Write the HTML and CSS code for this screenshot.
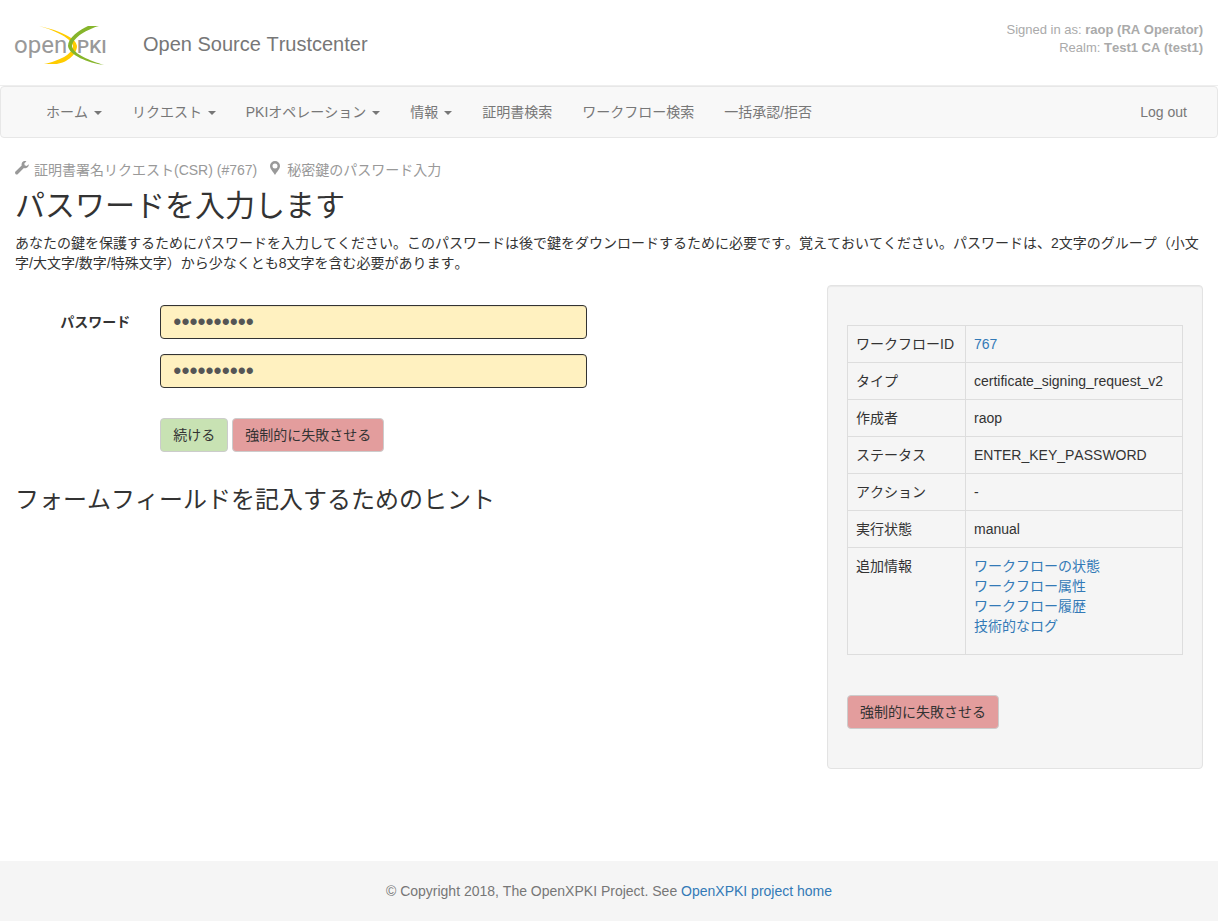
FILE: index.html
```
<!DOCTYPE html>
<html lang="ja">
<head>
<meta charset="utf-8">
<meta name="viewport" content="width=device-width, initial-scale=1">
<title>Open Source Trustcenter</title>
<link rel="stylesheet" href="styles.css">
</head>
<body>
<header class="header">
  <svg class="logo" viewBox="0 0 94 42" role="img" aria-label="openXPKI">
    <text class="logo-text" x="-1" y="29" font-size="24">open</text>
    <text class="logo-text logo-pki" x="62" y="29" font-size="19">PKI</text>
    <path fill="#fc0" d="M24 2C46 7 61 14 62 22C62 31 50 40 40 40H29C44 37 58 30 58 22C57 15 42 7 24 2Z"/>
    <path fill="#86b52b" d="M84 2H73C64 6 53 14 53 22C54 31 73 39 89 41C76 37 58 30 57 22C58 13 73 5 84 2Z"/>
  </svg>
  <span class="brand">Open Source Trustcenter</span>
  <div class="session">
    <div>Signed in as: <b>raop (RA Operator)</b></div>
    <div>Realm: <b>Test1 CA (test1)</b></div>
  </div>
</header>
<nav class="navbar">
  <a href="#">ホーム <span class="caret"></span></a>
  <a href="#">リクエスト <span class="caret"></span></a>
  <a href="#">PKIオペレーション <span class="caret"></span></a>
  <a href="#">情報 <span class="caret"></span></a>
  <a href="#">証明書検索</a>
  <a href="#">ワークフロー検索</a>
  <a href="#">一括承認/拒否</a>
  <a class="logout" href="#">Log out</a>
</nav>
<main class="page">
  <div class="crumbs">
    <svg class="crumb-icon" viewBox="0 0 14 14" aria-hidden="true"><path d="M13.8 3.2L11.7 4.9L9.6 4.2L9.4 2.3L11.4 .4C9.700-.3 7.700.3 6.900 1.900C6.500 2.800 6.500 3.700 6.700 4.500L.5 10.600C-.1 11.200-.1 12.200.5 12.900C1.200 13.600 2.200 13.600 2.900 12.900L8.900 6.900C10 7.400 11.500 7.200 12.500 6.300C13.500 5.500 13.900 4.300 13.800 3.200Z"/></svg>
    <span class="crumb">証明書署名リクエスト(CSR) (#767)</span>
    <svg class="crumb-icon" viewBox="0 0 14 14" aria-hidden="true"><path fill-rule="evenodd" d="M7 0A5 5 0 0 0 2 5C2 8 5 10.500 7 14C9 10.500 12 8 12 5A5 5 0 0 0 7 0ZM7 2.400A2.500 2.500 0 1 1 7 7.400A2.500 2.500 0 0 1 7 2.400Z"/></svg>
    <span class="crumb">秘密鍵のパスワード入力</span>
  </div>
  <h1>パスワードを入力します</h1>
  <p class="intro">あなたの鍵を保護するためにパスワードを入力してください。このパスワードは後で鍵をダウンロードするために必要です。覚えておいてください。パスワードは、2文字のグループ（小文字/大文字/数字/特殊文字）から少なくとも8文字を含む必要があります。</p>
  <div class="columns">
    <section>
      <form class="form">
        <label for="password">パスワード</label>
        <div class="fields">
          <input id="password" type="password" value="abcdefghij">
          <input type="password" value="abcdefghij" aria-label="パスワード">
        </div>
        <div class="actions">
          <button class="btn btn-ok" type="button">続ける</button>
          <button class="btn btn-fail" type="button">強制的に失敗させる</button>
        </div>
      </form>
      <h2>フォームフィールドを記入するためのヒント</h2>
    </section>
    <aside class="well">
      <table>
        <tr><th scope="row">ワークフローID</th><td><a href="#">767</a></td></tr>
        <tr><th scope="row">タイプ</th><td>certificate_signing_request_v2</td></tr>
        <tr><th scope="row">作成者</th><td>raop</td></tr>
        <tr><th scope="row">ステータス</th><td>ENTER_KEY_PASSWORD</td></tr>
        <tr><th scope="row">アクション</th><td>-</td></tr>
        <tr><th scope="row">実行状態</th><td>manual</td></tr>
        <tr><th scope="row">追加情報</th><td>
          <ul>
            <li><a href="#">ワークフローの状態</a></li>
            <li><a href="#">ワークフロー属性</a></li>
            <li><a href="#">ワークフロー履歴</a></li>
            <li><a href="#">技術的なログ</a></li>
          </ul>
        </td></tr>
      </table>
      <button class="btn btn-fail" type="button">強制的に失敗させる</button>
    </aside>
  </div>
</main>
<footer class="footer">© Copyright 2018, The OpenXPKI Project. See <a href="#">OpenXPKI project home</a></footer>
</body>
</html>
```
FILE: styles.css
```
* { box-sizing: border-box; }
body {
  margin: 0;
  min-height: 100vh;
  display: flex;
  flex-direction: column;
  background: #fff;
  color: #333;
  font: 14px/20px "Liberation Sans", "Noto Sans CJK JP", sans-serif;
  font-kerning: none;
  text-spacing-trim: space-all;
}
a { color: #337ab7; text-decoration: none; }

.header {
  display: flex;
  align-items: center;
  height: 86px;
  padding: 0 15px;
  border-bottom: 1px solid #eee;
}
.logo { width: 94px; height: 42px; margin-top: 5px; overflow: visible; }
.logo-text { font-family: Roboto, sans-serif; fill: #999; }
.logo-pki { font-weight: 500; }
.brand { margin: 3px 0 0 34px; font-size: 20px; color: #777; }
.session {
  align-self: flex-start;
  margin: 21px 0 0 auto;
  font-size: 13px;
  line-height: 18px;
  text-align: right;
  color: #aaa;
}

.navbar {
  display: flex;
  align-items: center;
  height: 52px;
  padding: 0 30px;
  border: 1px solid #e7e7e7;
  border-radius: 4px;
  background: #f8f8f8;
}
.navbar a { padding: 15px; color: #777; white-space: nowrap; }
.navbar .logout { margin-left: auto; padding-right: 0; }
.caret {
  display: inline-block;
  margin-left: 2px;
  vertical-align: middle;
  border-top: 4px solid;
  border-left: 4px solid transparent;
  border-right: 4px solid transparent;
}

.page { flex: 1; padding: 22px 15px 92px; }
.crumbs { display: flex; align-items: flex-start; color: #999; }
.crumb-icon { width: 14px; height: 14px; margin: 1px 5px 0 0; fill: #999; }
.crumb { margin-right: 11px; }
h1, h2 { font-weight: 400; }
h1 { margin: 8px 0 9px; font-size: 30px; line-height: 36px; }
h2 { margin: 35px 0 10px; font-size: 24px; line-height: 26px; }
.intro { margin: 0 0 12px; }

.columns {
  display: grid;
  grid-template-columns: 2fr 1fr;
  align-items: start;
  margin: 0 -15px;
}
.columns > section { padding: 20px 15px 0; }
.form {
  display: grid;
  grid-template-columns: 2fr 7fr 3fr;
  row-gap: 30px;
}
.form label { padding: 7px 15px 0 0; text-align: right; font-weight: 700; }
.fields { display: grid; gap: 15px; padding: 0 15px; }
.fields input {
  width: 100%;
  height: 34px;
  padding: 4px 12px;
  border: 1px solid #333;
  border-radius: 4px;
  background: #fff1c0;
  color: #555;
  font: 23px/24px "Liberation Sans", sans-serif;
  box-shadow: inset 0 1px 1px rgba(0, 0, 0, .075);
}
.actions { grid-column: 2 / 4; display: flex; gap: 4px; padding-left: 15px; }
.btn {
  height: 34px;
  padding: 6px 12px;
  border: 1px solid #ccc;
  border-radius: 4px;
  color: #333;
  font: inherit;
  white-space: nowrap;
}
.btn-ok { background: #c8e2b3; }
.btn-fail { background: #e39d9d; }

.well {
  margin: 0 15px;
  padding: 39px 19px;
  border: 1px solid #e3e3e3;
  border-radius: 4px;
  background: #f5f5f5;
  box-shadow: inset 0 1px 1px rgba(0, 0, 0, .05);
}
.well table { width: 100%; margin-bottom: 40px; border-collapse: collapse; }
.well th, .well td {
  padding: 8px;
  border: 1px solid #ddd;
  font-weight: 400;
  text-align: left;
  vertical-align: top;
}
.well th { width: 118px; white-space: nowrap; }
.well ul { margin: 0 0 10px; padding: 0; list-style: none; }

.footer {
  padding: 20px 15px;
  background: #f5f5f5;
  color: #777;
  text-align: center;
}
```
